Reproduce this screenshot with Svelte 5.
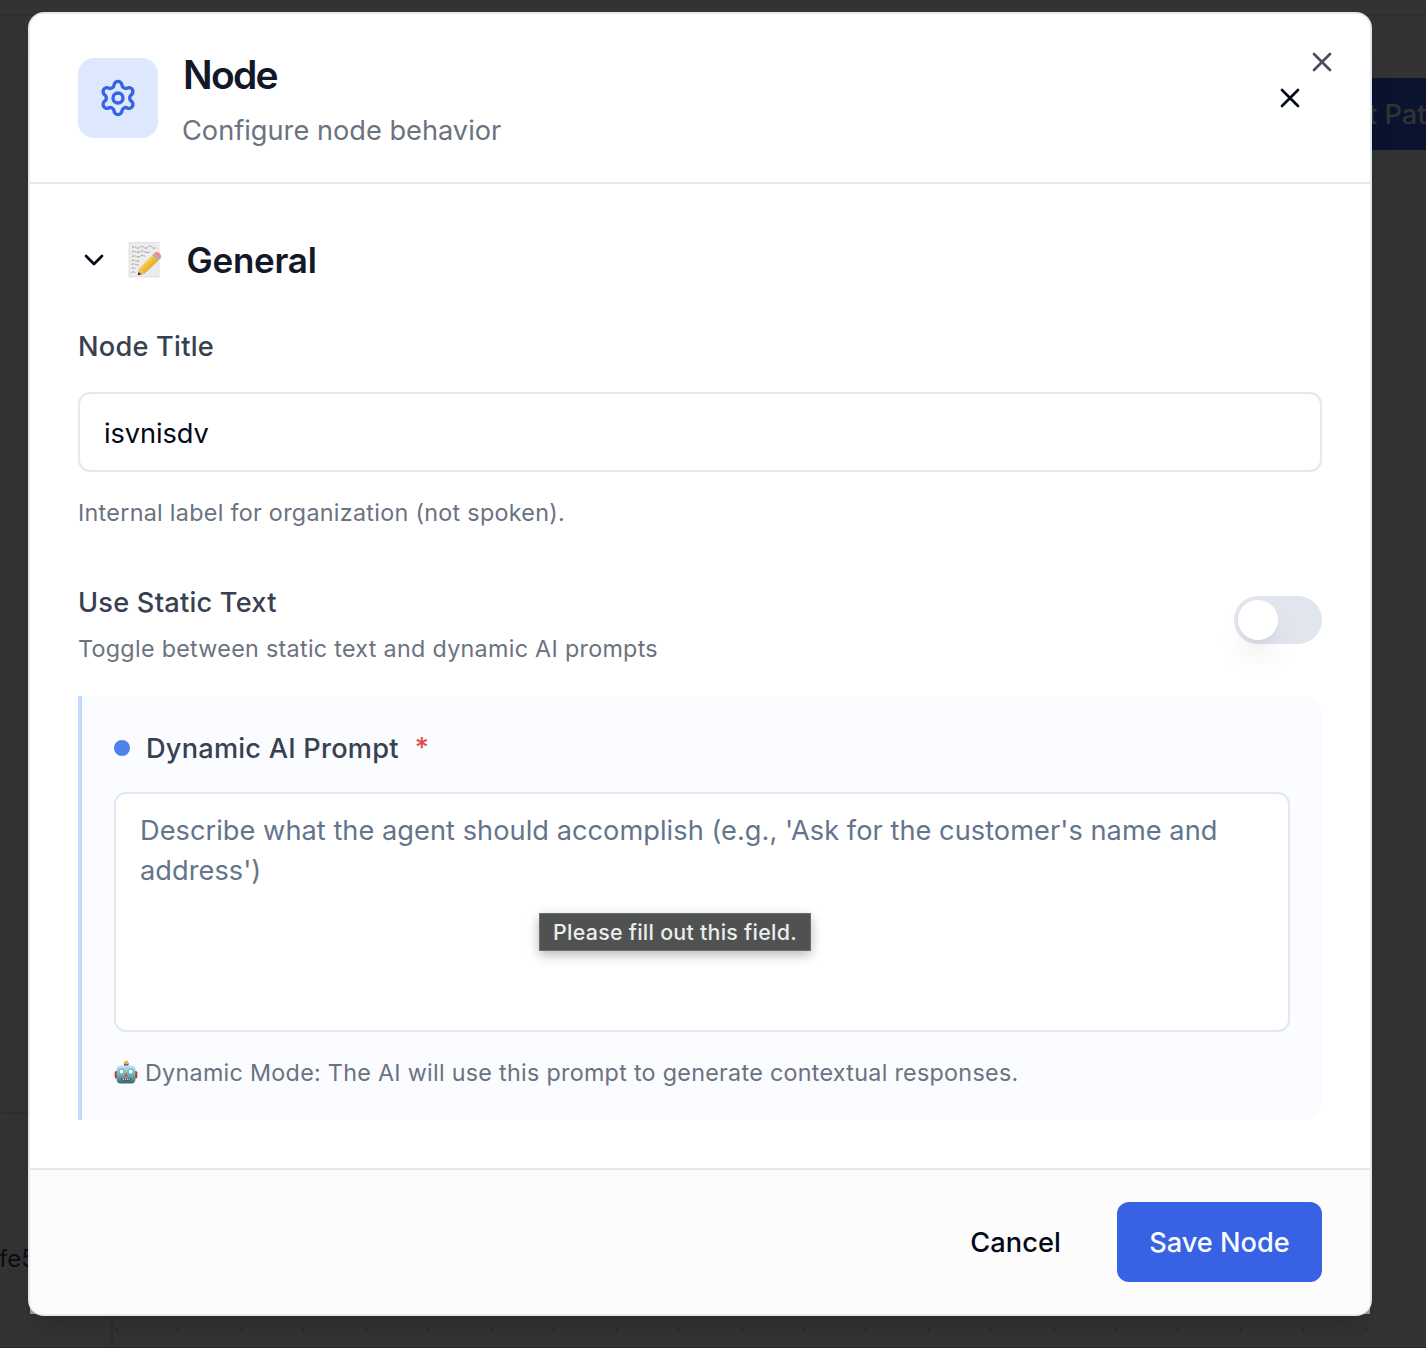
<script>
  let title = $state('isvnisdv');
  let prompt = $state('');
  const dots = Array.from({ length: 21 }, (_, i) => 115 + i * 62.46);
</script>

<div class="page">
  <div class="rule top"></div>
  <div class="rule side"></div>
  <div class="rule column"></div>
  <div class="rule bottom"></div>
  <div class="behind-button"><span>t Pat</span></div>
  <div class="behind-text">fe5</div>
  {#each dots as x}
    <i class="dot" style:left="{x}px"></i>
  {/each}

  <div class="modal" role="dialog" aria-label="Node">
    <header>
      <div class="badge">
        <svg class="gear" viewBox="0 0 24 24">
          <path d="M9.671 4.136a2.34 2.34 0 0 1 4.659 0 2.34 2.34 0 0 0 3.319 1.915 2.34 2.34 0 0 1 2.33 4.033 2.34 2.34 0 0 0 0 3.831 2.34 2.34 0 0 1-2.33 4.033 2.34 2.34 0 0 0-3.319 1.915 2.34 2.34 0 0 1-4.659 0 2.34 2.34 0 0 0-3.32-1.915 2.34 2.34 0 0 1-2.33-4.033 2.34 2.34 0 0 0 0-3.831A2.34 2.34 0 0 1 6.35 6.051a2.34 2.34 0 0 0 3.319-1.915" />
          <circle cx="12" cy="12" r="3" />
        </svg>
      </div>
      <div class="heading">
        <h2>Node</h2>
        <p>Configure node behavior</p>
      </div>
      <button class="plain" aria-label="Close panel">
        <svg class="icon" viewBox="0 0 24 24"><path d="M18 6 6 18M6 6l12 12" /></svg>
      </button>
    </header>
    <button class="corner-close" aria-label="Close">
      <svg class="icon" viewBox="0 0 24 24"><path d="M18 6 6 18M6 6l12 12" /></svg>
    </button>

    <main>
      <div class="section">
        <svg class="icon" viewBox="0 0 24 24"><path d="m6 9 6 6 6-6" /></svg>
        <svg class="memo" viewBox="0 0 36 36">
          <defs>
            <linearGradient id="pencil" x1="0" y1="0" x2="1" y2="1">
              <stop offset="0.25" stop-color="#ffdf63" />
              <stop offset="0.6" stop-color="#e9ae27" />
              <stop offset="0.9" stop-color="#ad7411" />
            </linearGradient>
          </defs>
          <rect x="1" y="0.5" width="30" height="34.500" fill="#ececec" stroke="#dadada" stroke-width="0.7" />
          <g fill="none" stroke="#808080" stroke-width="0.8" stroke-dasharray="2.4 .8 1.2 .6 3 1">
            <path d="M4 5.500q2-1.400 4 0t4-.3 4 .2 4-.4 4 .2 4-.3" />
            <path d="M4 10q2-1.200 4-.1t4-.2 5 .2 5-.4" />
            <path d="M4 14.500q2-1.200 4-.1t4-.2 5 .1" />
            <path d="M3.500 18.800q2-1.200 4-.1t4-.2" />
            <path d="M3.500 22.500q2-1.200 4-.1t3-.2" />
            <path d="M3.500 26.500q2-1.200 4-.1" />
            <path d="M3.500 30.500q2-1.200 4-.1" />
          </g>
          <path d="M9.800 33.200 11 26.500 24.500 13l6 5.500L16 31.900Z" fill="url(#pencil)" />
          <path d="m9.800 33.200 1.200-6.700c2.200.2 4.800 2.500 5 5.400Z" fill="#e8bf7a" />
          <path d="m9.800 33.200.6-3q2.200.5 2.700 2.300Z" fill="#333" />
          <path d="m24 13.500 1.800-1.700c2 .6 4.700 3.100 5.500 5.600l-1.800 1.700c-.9-2.500-3.100-4.800-5.500-5.600Z" fill="#a9b0b5" />
          <path d="m25.800 11.800 1.200-1.200c3-2 7.800 2.600 5.600 5.600l-1.300 1.200c-.9-2.500-3.300-4.800-5.500-5.600Z" fill="#ec8b90" />
        </svg>
        <h3>General</h3>
      </div>

      <label class="label" for="node-title">Node Title</label>
      <input id="node-title" bind:value={title} />
      <p class="hint">Internal label for organization (not spoken).</p>

      <div class="toggle-row">
        <div>
          <div class="label static">Use Static Text</div>
          <p class="hint toggle-hint">Toggle between static text and dynamic AI prompts</p>
        </div>
        <button class="switch" role="switch" aria-checked="false" aria-label="Use Static Text"><span></span></button>
      </div>

      <section class="prompt">
        <label class="label prompt-label" for="prompt"><i></i><span>Dynamic AI Prompt</span><b>*</b></label>
        <div class="field">
          <textarea id="prompt" bind:value={prompt} placeholder="Describe what the agent should accomplish (e.g., 'Ask for the customer's name and address')"></textarea>
          <div class="tooltip">Please fill out this field.</div>
        </div>
        <p class="hint mode">
          <svg class="robot" viewBox="0 0 24 24">
            <defs>
              <linearGradient id="face" x1="0" y1="0" x2="0" y2="1">
                <stop offset="0" stop-color="#c9e6e8" />
                <stop offset="0.5" stop-color="#7eb0b5" />
                <stop offset="1" stop-color="#2e6a72" />
              </linearGradient>
            </defs>
            <rect x="0.700" y="11" width="22.600" height="7.500" rx="1.500" fill="#b23c38" />
            <rect x="10" y="3" width="4.500" height="3" fill="#5c4a8a" />
            <circle cx="12.200" cy="2.500" r="2" fill="#f5b73d" />
            <rect x="2.700" y="5.500" width="18.600" height="18" rx="4" fill="url(#face)" />
            <circle cx="7.500" cy="11.500" r="3.100" fill="#5bb6c9" />
            <circle cx="16.700" cy="11.500" r="3.100" fill="#5bb6c9" />
            <circle cx="7.500" cy="11.500" r="1.900" fill="#f2ffff" />
            <circle cx="16.700" cy="11.500" r="1.900" fill="#f2ffff" />
            <path d="m12.100 12.500 1.900 3.800h-3.800Z" fill="#d94b3c" />
            <path d="M7 18.200h10.200q-.4 2.300-2.200 2.300H9.200Q7.400 20.500 7 18.200Z" fill="#4b4146" />
            <path d="M8.500 19.200h7.400" stroke="#e7e7e7" stroke-width="1.300" stroke-dasharray="1.500 .7" />
          </svg>
          <span>Dynamic Mode: The AI will use this prompt to generate contextual responses.</span>
        </p>
      </section>
    </main>

    <footer>
      <button class="cancel">Cancel</button>
      <button class="save">Save Node</button>
    </footer>
  </div>
</div>

<style>
  :global(body) {
    margin: 0;
    background: #333;
  }
  .page,
  .page * {
    box-sizing: border-box;
  }
  .page {
    position: relative;
    width: 1426px;
    height: 1348px;
    padding: 12px 0 0 28px;
    overflow: hidden;
    background: #333;
    color: #030817;
    font-family: Inter, 'Liberation Sans', sans-serif;
    font-size: 27.2px;
    line-height: 40px;
  }
  h2, h3, p { margin: 0; }
  button {
    padding: 0;
    border: 0;
    background: none;
    color: inherit;
    font: inherit;
  }
  .rule { position: absolute; background: #2e2e2e; }
  .top { left: 0; top: 14px; width: 1426px; height: 2px; }
  .side { left: 0; top: 1112px; width: 28px; height: 2px; }
  .column { left: 111px; top: 1316px; width: 2px; height: 32px; }
  .bottom { left: 0; top: 1347px; width: 1426px; height: 1px; background: #30242a; }
  .dot {
    position: absolute;
    top: 1328px;
    width: 3px;
    height: 3px;
    border-radius: 50%;
    background: #2b2b2b;
  }
  .behind-button {
    position: absolute;
    left: 1340px;
    top: 78px;
    width: 86px;
    height: 72px;
    padding: 17px 0 0 28px;
    overflow: hidden;
    background: #0a142f;
    color: #333;
    font-weight: 500;
    white-space: nowrap;
  }
  .behind-text {
    position: absolute;
    left: -1px;
    top: 1239px;
    color: #0c0e13;
    font-size: 24px;
  }
  .modal {
    position: relative;
    display: flex;
    flex-direction: column;
    width: 1344px;
    height: 1304px;
    border: 2px solid #e2e8f0;
    border-radius: 16px;
    background: #fff;
    box-shadow: 0 20px 30px -6px rgb(0 0 0 / 10%), 0 8px 12px -8px rgb(0 0 0 / 10%);
  }
  svg {
    display: block;
    flex: none;
  }
  .icon,
  .gear {
    fill: none;
    stroke: currentColor;
    stroke-width: 2;
    stroke-linecap: round;
    stroke-linejoin: round;
  }
  .icon { width: 32px; height: 32px; }
  header {
    display: flex;
    align-items: center;
    gap: 24px;
    height: 170px;
    padding: 0 64px 0 48px;
    border-bottom: 2px solid #e5e7eb;
  }
  .badge {
    display: grid;
    place-items: center;
    width: 80px;
    height: 80px;
    border-radius: 16px;
    background: #dde8fc;
    color: #3662e3;
  }
  .gear { width: 40px; height: 40px; }
  .heading { flex: 1; padding-top: 9px; }
  h2 {
    padding-left: 1px;
    color: #111827;
    font-size: 39px;
    font-weight: 600;
    letter-spacing: -1.7px;
    line-height: 40px;
  }
  .heading p {
    margin-top: 16px;
    color: #6b7280;
  }
  .corner-close {
    position: absolute;
    right: 32px;
    top: 32px;
    color: #4b4b5b;
  }
  main {
    flex: 1;
    padding: 48px 48px 0;
  }
  .section {
    display: flex;
    align-items: center;
    height: 56px;
  }
  .memo { width: 36px; height: 36px; margin-left: 18px; }
  h3 {
    margin-left: 22.5px;
    color: #111827;
    font-size: 35px;
    font-weight: 600;
    letter-spacing: -0.25px;
  }
  .label {
    display: block;
    color: #374151;
    font-weight: 500;
    letter-spacing: 0.22px;
  }
  label[for='node-title'] { margin-top: 39px; }
  input,
  textarea {
    display: block;
    width: 100%;
    border: 2px solid #e2e8f0;
    border-radius: 12px;
    outline: 0;
    background: #fff;
    color: #030817;
    font: inherit;
    letter-spacing: 0.04px;
  }
  input {
    height: 80px;
    margin-top: 25px;
    padding: 2px 24px 0;
    letter-spacing: -0.08px;
  }
  .hint {
    color: #6b7280;
    font-size: 23.3px;
    letter-spacing: 0.3px;
    line-height: 32px;
  }
  input + .hint { margin-top: 25px; }
  .toggle-row {
    display: flex;
    justify-content: space-between;
    align-items: flex-start;
    height: 113px;
    margin-top: 54px;
  }
  .toggle-hint { margin-top: 10px; }
  .switch {
    width: 88px;
    height: 48px;
    margin-top: 13px;
    padding: 4px;
    border-radius: 24px;
    background: #e1e6ee;
  }
  .switch span {
    display: block;
    width: 40px;
    height: 40px;
    border-radius: 50%;
    background: #fff;
    box-shadow: 0 20px 30px -6px rgb(0 0 0 / 10%), 0 8px 12px -8px rgb(0 0 0 / 10%);
  }
  .prompt {
    height: 424px;
    padding: 32px;
    border-left: 4px solid #c2dafb;
    border-radius: 0 16px 16px 0;
    background: #fafcff;
  }
  .prompt-label {
    display: flex;
    align-items: center;
  }
  .prompt-label i {
    width: 16px;
    height: 16px;
    margin-right: 16px;
    border-radius: 50%;
    background: #4e80ee;
  }
  .prompt-label span { padding-top: 2px; }
  .prompt-label b {
    margin-left: 16px;
    color: #dd4b45;
    font-weight: 500;
  }
  .field { position: relative; margin-top: 22px; }
  textarea {
    height: 240px;
    padding: 17px 24px 15px;
    resize: none;
  }
  textarea::placeholder { color: #64748b; opacity: 1; }
  .tooltip {
    position: absolute;
    left: 425px;
    top: 121px;
    width: 272px;
    height: 38px;
    border: 1px solid #6d6f6e;
    background: #505251;
    color: #ececec;
    font-size: 21.4px;
    font-weight: 500;
    letter-spacing: 0.27px;
    line-height: 36px;
    text-align: center;
    white-space: nowrap;
    box-shadow: 0 4px 12px rgb(0 0 0 / 28%);
  }
  .mode {
    display: flex;
    align-items: center;
    margin-top: 25px;
  }
  .robot { width: 24px; height: 24px; margin: -2px 7px 0 0; }
  .mode span { letter-spacing: 0.29px; }
  .prompt-label { height: 42px; margin-top: -1px; padding-bottom: 0; }
  .prompt-label + .field { margin-top: 23px; }
  footer {
    display: flex;
    justify-content: flex-end;
    align-items: center;
    height: 146px;
    padding: 0 48px;
    border-top: 2px solid #e5e7eb;
    background: rgb(249 250 251 / 50%);
    font-weight: 500;
  }
  .cancel {
    margin-right: 56px;
    padding-top: 2px;
    letter-spacing: 0.1px;
  }
  .save {
    width: 205px;
    height: 80px;
    padding-top: 2px;
    border-radius: 12px;
    background: #3762e3;
    color: #f8fafc;
  }
</style>
